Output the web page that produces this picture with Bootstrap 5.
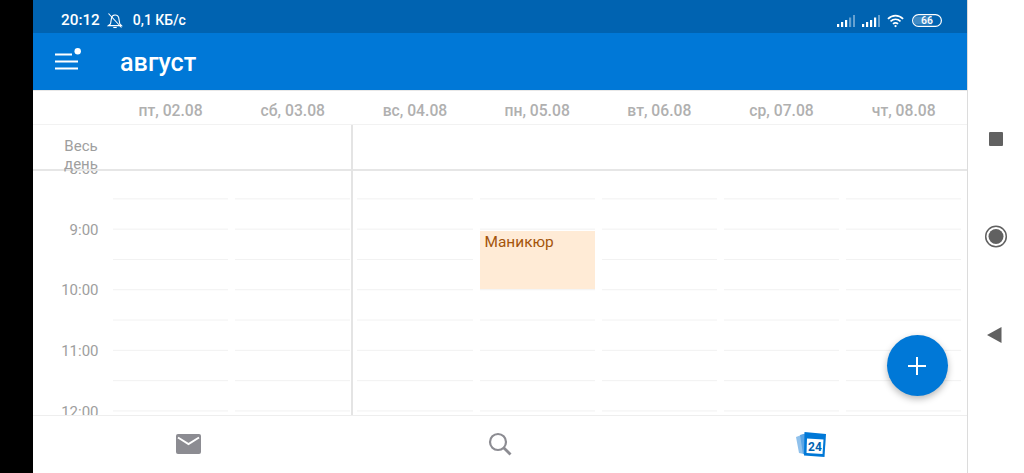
<!DOCTYPE html>
<html lang="ru">
<head>
<meta charset="utf-8">
<title>август</title>
<link rel="stylesheet" href="https://cdn.jsdelivr.net/npm/bootstrap@5.3.0/dist/css/bootstrap.min.css">
<style>
html,body{height:473px;overflow:hidden;background:#fff;font-family:Roboto,"Liberation Sans",sans-serif}
.side-black{width:33px;background:#000}
.app-shell{width:934px;position:relative}
.status-strip{height:33px;background:#0063b1;color:#fff;font-weight:500;padding:8px 25px 0 28px}
.status-time{font-size:15.3px;margin-right:7px}
.status-speed{font-size:14px;margin-left:10px}
.app-head{height:57px;background:#0078d7;color:#fff;padding-left:22px}
.app-title{font-size:25.2px;font-weight:500;margin-left:39px;line-height:1;padding-top:2px}
.day-head{height:35px;border-top:1px solid #e8e8e8;border-bottom:1px solid #f2f2f2;padding-left:76.5px}
.day-name{width:122.2px;text-align:center;font-size:15.7px;font-weight:500;color:#b0b0b0;padding-top:7px}
.allday{height:46px;border-bottom:2px solid #e6e6e6;position:relative;z-index:2}
.allday-label{width:40px;margin-left:28px;text-align:center;font-size:15px;line-height:18px;color:#9e9e9e;padding-top:12px}
.time-grid{height:244px;overflow:hidden}
.hours{width:76.5px;margin-top:-31.8px;padding-right:11px;text-align:right;font-size:15px;color:#9e9e9e}
.hour-lab{height:60.6px;line-height:60.6px}
.grid-day{width:122.2px;padding:0 3.5px}
.grid-fill{height:100%;background:repeating-linear-gradient(to bottom,transparent 0,transparent 27.6px,#f1f1f1 27.6px,#f1f1f1 28.4px,transparent 28.4px,transparent 30.3px);background-size:100% 30.3px;padding-top:60px}
.appt{height:57.6px;background:#ffebd6;color:#a4540a;font-size:15.4px;line-height:1;padding:4px 5px}
.now-rule{position:absolute;left:317.5px;top:125px;width:2.5px;height:290px;background:#e4e4e4;z-index:3}
.tab-strip{height:58px;border-top:1px solid #eeeeee;background:#fff;position:relative;z-index:4}
.tab-slot{position:absolute;top:0}
.fab-add{position:absolute;left:853.5px;top:335px;width:61px;height:61px;background:#0078d7;border:0;box-shadow:0 3px 7px rgba(0,0,0,.28);z-index:5}
.nav-side{width:57px;border-left:1px solid #dcdcdc;background:#fff}
.nav-slot{position:absolute;left:968px}
</style>
</head>
<body class="d-flex m-0">
<div class="side-black flex-shrink-0"></div>
<main class="app-shell flex-shrink-0 d-flex flex-column">
  <div class="status-strip d-flex align-items-center">
    <span class="status-time">20:12</span>
    <svg width="16" height="17" viewBox="0 0 16 17" fill="none" stroke="#fff" stroke-width="1.100"><path d="M3.500 12 4.500 6.200a3.700 3.700 0 0 1 7.200-.5L12.800 12 14.500 13.600H1.500Z"/><path d="M1.500 1.500 14.500 15.500"/><path d="M6.300 15.500h3.400"/></svg>
    <span class="status-speed">0,1 КБ/с</span>
    <div class="ms-auto d-flex align-items-center" style="gap:7px">
      <svg width="18" height="14" viewBox="0 0 18 14"><g fill="#fff"><rect x="0" y="10" width="2.200" height="3"/><rect x="4" y="8" width="2.200" height="5"/><rect x="8" y="6" width="2.200" height="7"/></g><g fill="#fff" opacity=".4"><rect x="12" y="3.500" width="2.200" height="9.500"/><rect x="16" y="1" width="2.200" height="12"/></g></svg>
      <svg width="18" height="14" viewBox="0 0 18 14"><g fill="#fff"><rect x="0" y="10" width="2.200" height="3"/><rect x="4" y="8" width="2.200" height="5"/><rect x="8" y="6" width="2.200" height="7"/><rect x="12" y="3.500" width="2.200" height="9.500"/></g><rect x="16" y="1" width="2.200" height="12" fill="#fff" opacity=".4"/></svg>
      <svg width="18" height="14" viewBox="0 0 19 14" fill="none" stroke="#fff" stroke-width="1.800"><path d="M1 4.800c4.600-4.600 11.400-4.600 16 0"/><path d="M3.700 7.500c3.200-3 7.400-3 10.600 0"/><path d="M6.300 10c1.700-1.400 3.700-1.400 5.400 0"/><circle cx="9" cy="12.300" r="1.200" fill="#fff" stroke="none"/></svg>
      <svg width="30" height="13" viewBox="0 0 30 13"><rect x=".6" y=".6" width="28.800" height="11.800" rx="5.900" fill="none" stroke="#fff" stroke-width="1.200"/><path d="M3 2.500h17v8H3a3 4 0 0 1-1-4 3 4 0 0 1 1-4Z" fill="#fff" opacity=".25"/><text x="15" y="10" text-anchor="middle" font-size="10.500" font-weight="500" fill="#fff" font-family="Roboto, sans-serif">66</text></svg>
    </div>
  </div>
  <header class="app-head d-flex align-items-center">
    <svg width="26" height="28" viewBox="0 0 26 28" fill="#fff"><rect x="0" y="5.500" width="17" height="2"/><rect x="0" y="12.500" width="23" height="2"/><rect x="0" y="19.500" width="23" height="2"/><circle cx="22.700" cy="3.200" r="3.200"/></svg>
    <div class="app-title">август</div>
  </header>
  <div class="day-head d-flex align-items-center">
    <div class="day-name">пт, 02.08</div>
    <div class="day-name">сб, 03.08</div>
    <div class="day-name">вс, 04.08</div>
    <div class="day-name">пн, 05.08</div>
    <div class="day-name">вт, 06.08</div>
    <div class="day-name">ср, 07.08</div>
    <div class="day-name">чт, 08.08</div>
  </div>
  <div class="allday">
    <div class="allday-label">Весь день</div>
  </div>
  <div class="time-grid d-flex">
    <div class="hours flex-shrink-0">
      <div class="hour-lab">8:00</div>
      <div class="hour-lab">9:00</div>
      <div class="hour-lab">10:00</div>
      <div class="hour-lab">11:00</div>
      <div class="hour-lab">12:00</div>
    </div>
    <div class="grid-day flex-shrink-0"><div class="grid-fill"></div></div>
    <div class="grid-day flex-shrink-0"><div class="grid-fill"></div></div>
    <div class="grid-day flex-shrink-0"><div class="grid-fill"></div></div>
    <div class="grid-day flex-shrink-0"><div class="grid-fill"><div class="appt">Маникюр</div></div></div>
    <div class="grid-day flex-shrink-0"><div class="grid-fill"></div></div>
    <div class="grid-day flex-shrink-0"><div class="grid-fill"></div></div>
    <div class="grid-day flex-shrink-0"><div class="grid-fill"></div></div>
  </div>
  <div class="now-rule"></div>
  <nav class="tab-strip d-flex">
    <svg class="tab-slot" style="left:143px;top:18px" width="25" height="20" viewBox="0 0 25 20"><rect x="0" y="0" width="25" height="20" rx="2" fill="#8c8c92"/><path d="M2 3.500 12.500 10 23 3.500" fill="none" stroke="#fff" stroke-width="2"/></svg>
    <svg class="tab-slot" style="left:455px;top:16px" width="24" height="24" viewBox="0 0 24 24" fill="none" stroke="#8c8c92"><circle cx="10" cy="10" r="8" stroke-width="2.200"/><path d="M15.700 15.700 22.500 22.500" stroke-width="2.800"/></svg>
    <svg class="tab-slot" style="left:762px;top:15px" width="32" height="27" viewBox="0 0 32 27"><path d="M1 6 9 3v20l-5-1Z" fill="#8fc1ec"/><path d="M5 4 12 2v22l-4-1Z" fill="#5aa5e6"/><path d="M9.500 1 31 3l-1.500 23L9 24.500Z" fill="#0078d7"/><path d="M12 7.500 28.500 8.500l-1 14.500L11.500 22Z" fill="#fff"/><text x="20" y="20" text-anchor="middle" font-size="12" font-weight="700" fill="#0063b1" font-family="Roboto, sans-serif">24</text></svg>
  </nav>
  <button class="fab-add btn rounded-circle p-0 d-flex align-items-center justify-content-center" type="button" aria-label="Добавить">
    <svg width="18" height="18" viewBox="0 0 18 18" fill="#fff"><rect x="8" y="0" width="2" height="18"/><rect x="0" y="8" width="18" height="2"/></svg>
  </button>
</main>
<aside class="nav-side flex-shrink-0"></aside>
<svg class="nav-slot" style="top:125px" width="56" height="230" viewBox="0 0 56 230">
  <rect x="21" y="7" width="14" height="14" rx="1" fill="#616161"/>
  <circle cx="28" cy="111.500" r="10.300" fill="none" stroke="#616161" stroke-width="1.500"/>
  <circle cx="28" cy="111.500" r="7.500" fill="#616161"/>
  <path d="M19 210 33.500 202v16Z" fill="#616161"/>
</svg>
</body>
</html>
